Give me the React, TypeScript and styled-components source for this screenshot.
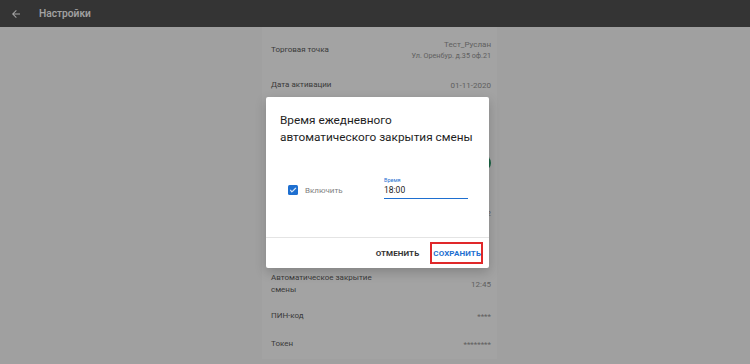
import styled, { createGlobalStyle } from "styled-components";

const GlobalStyle = createGlobalStyle`
  html, body {
    margin: 0;
    padding: 0;
    background: #fafafa;
    font-family: Roboto, "Noto Sans", sans-serif;
  }
  #root {
    height: 364px;
    overflow: hidden;
  }
`;

const Page = styled.div`
  position: relative;
  height: 364px;
  display: flex;
  flex-direction: column;
  background: #fafafa;
`;

const TopBar = styled.header`
  height: 27px;
  flex: none;
  display: flex;
  align-items: center;
  background: #525252;
  color: #ffffff;
  padding-left: 10px;
  gap: 17px;
  font-size: 10.2px;
  font-weight: 500;
`;

const Main = styled.main`
  flex: 1;
  display: flex;
  justify-content: center;
  padding: 0 0 5px 9px;
`;

const Panel = styled.section`
  width: 235px;
  background: #ffffff;
  display: flex;
  flex-direction: column;
  padding: 0 6px 0 9px;
  box-sizing: border-box;
`;

const Row = styled.div<{ $h: number }>`
  height: ${(p) => p.$h}px;
  display: flex;
  align-items: center;
  justify-content: space-between;
  font-size: 8px;
  color: #5c5c5c;
`;

const Label = styled.div`
  max-width: 104px;
  line-height: 12px;
`;

const Value = styled.div`
  color: #969696;
  text-align: right;
  line-height: 13px;
`;

const SubValue = styled.div`
  font-size: 7.2px;
  line-height: 10px;
`;

const Switch = styled.div`
  width: 28px;
  height: 12px;
  border-radius: 6px;
  background: #9ad9b6;
  position: relative;
  margin-right: 3px;
  span {
    position: absolute;
    right: -3px;
    top: -2px;
    width: 16px;
    height: 16px;
    border-radius: 50%;
    background: #2a9d6a;
  }
`;

const Backdrop = styled.div`
  position: absolute;
  inset: 0;
  background: rgba(0, 0, 0, 0.36);
  display: flex;
  align-items: center;
  justify-content: center;
`;

const Dialog = styled.div`
  width: 223px;
  height: 171px;
  margin: 1px 0 0 5px;
  background: #ffffff;
  border-radius: 2px;
  box-shadow: 0 4px 12px rgba(0, 0, 0, 0.2);
  display: flex;
  flex-direction: column;
`;

const Title = styled.h2`
  margin: 0;
  padding: 15px 8px 0 14px;
  font-size: 11.8px;
  line-height: 17px;
  font-weight: 400;
  color: #1e1e1e;
  white-space: nowrap;
`;

const Content = styled.div`
  flex: 1;
  display: flex;
  align-items: center;
  padding: 0 0 3px 22px;
`;

const CheckLabel = styled.label`
  width: 96px;
  display: flex;
  align-items: center;
  gap: 7px;
  font-size: 8px;
  color: #808080;
`;

const Box = styled.span`
  width: 10px;
  height: 10px;
  border-radius: 1.5px;
  background: #1e6fd0;
  display: flex;
  align-items: center;
  justify-content: center;
`;

const Field = styled.div`
  width: 84px;
  display: flex;
  flex-direction: column;
  border-bottom: 1.5px solid #1e6fd0;
  padding-bottom: 2px;
  margin-bottom: 4px;
`;

const FieldLabel = styled.span`
  font-size: 5.5px;
  line-height: 7px;
  color: #1e6fd0;
`;

const FieldValue = styled.span`
  font-size: 8.5px;
  line-height: 12px;
  color: #222222;
`;

const Actions = styled.div`
  height: 30px;
  flex: none;
  border-top: 1px solid #e4e4e4;
  display: flex;
  align-items: center;
  justify-content: flex-end;
  gap: 11px;
  padding-right: 6px;
`;

const Button = styled.button<{ $primary?: boolean }>`
  border: 2px solid ${(p) => (p.$primary ? "#e0282a" : "transparent")};
  background: none;
  padding: 0 0 0 1px;
  height: 22px;
  font-family: Roboto, sans-serif;
  font-size: 8px;
  font-weight: 700;
  letter-spacing: 0.1px;
  color: ${(p) => (p.$primary ? "#1e6fd0" : "#333333")};
  margin-right: ${(p) => (p.$primary ? 0 : -2)}px;
`;

export default function App() {
  return (
    <Page>
      <GlobalStyle />
      <TopBar>
        <svg width="12" height="12" viewBox="0 0 24 24">
          <path
            d="M20 11H7.83l5.59-5.59L12 4l-8 8 8 8 1.41-1.41L7.83 13H20v-2z"
            fill="#ffffff"
          />
        </svg>
        <span>Настройки</span>
      </TopBar>
      <Main>
        <Panel>
          <Row $h={45}>
            <Label>Торговая точка</Label>
            <Value>
              Тест_Руслан
              <SubValue>Ул. Оренбур. д.35 оф.21</SubValue>
            </Value>
          </Row>
          <Row $h={26}>
            <Label>Дата активации</Label>
            <Value>01-11-2020</Value>
          </Row>
          {/* rows hidden behind the dialog */}
          <Row $h={32} />
          <Row $h={66}>
            <span />
            <Switch>
              <span />
            </Switch>
          </Row>
          <Row $h={34}>
            <span />
            <Value>1.4.2</Value>
          </Row>
          <Row $h={36} />
          <Row $h={36}>
            <Label>Автоматическое закрытие смены</Label>
            <Value>12:45</Value>
          </Row>
          <Row $h={28}>
            <Label>ПИН-код</Label>
            <Value>****</Value>
          </Row>
          <Row $h={28}>
            <Label>Токен</Label>
            <Value>********</Value>
          </Row>
        </Panel>
      </Main>
      <Backdrop>
        <Dialog>
          <Title>
            Время ежедневного
            <br />
            автоматического закрытия смены
          </Title>
          <Content>
            <CheckLabel>
              <Box>
                <svg width="8" height="8" viewBox="0 0 24 24">
                  <path
                    d="M9 16.17L4.83 12l-1.42 1.41L9 19 21 7l-1.41-1.41z"
                    fill="#ffffff"
                    stroke="#ffffff"
                    strokeWidth="1.5"
                  />
                </svg>
              </Box>
              Включить
            </CheckLabel>
            <Field>
              <FieldLabel>Время</FieldLabel>
              <FieldValue>18:00</FieldValue>
            </Field>
          </Content>
          <Actions>
            <Button>ОТМЕНИТЬ</Button>
            <Button $primary>СОХРАНИТЬ</Button>
          </Actions>
        </Dialog>
      </Backdrop>
    </Page>
  );
}
